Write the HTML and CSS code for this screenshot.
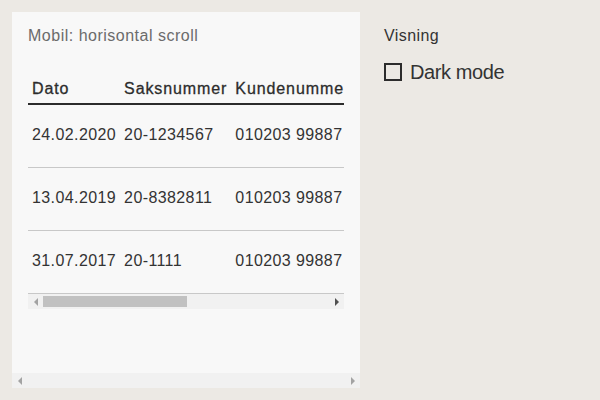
FILE: index.html
```html
<!DOCTYPE html>
<html lang="no">
<head>
<meta charset="utf-8">
<title>Tabell</title>
<link rel="stylesheet" href="styles.css">
</head>
<body>
<main class="layout">
  <section class="panel">
    <div class="panel-body">
      <h2 class="panel-title">Mobil: horisontal scroll</h2>
      <div class="table-scroll">
        <div class="table-clip">
          <table class="data-table">
            <thead>
              <tr>
                <th>Dato</th>
                <th>Saksnummer</th>
                <th>Kundenummer</th>
                <th>Kundenavn</th>
                <th>Status</th>
              </tr>
            </thead>
            <tbody>
              <tr>
                <td>24.02.2020</td>
                <td>20-1234567</td>
                <td>010203 99887</td>
                <td>Ola Nordmann</td>
                <td>Åpen</td>
              </tr>
              <tr>
                <td>13.04.2019</td>
                <td>20-8382811</td>
                <td>010203 99887</td>
                <td>Kari Nordmann</td>
                <td>Lukket</td>
              </tr>
              <tr>
                <td>31.07.2017</td>
                <td>20-1111</td>
                <td>010203 99887</td>
                <td>Per Hansen</td>
                <td>Lukket</td>
              </tr>
            </tbody>
          </table>
        </div>
        <div class="scrollbar" aria-hidden="true">
          <span class="sb-btn"><span class="arrow arrow-left arrow-dim"></span></span>
          <span class="sb-track"><span class="sb-thumb"></span></span>
          <span class="sb-btn"><span class="arrow arrow-right"></span></span>
        </div>
      </div>
    </div>
    <div class="scrollbar" aria-hidden="true">
      <span class="sb-btn"><span class="arrow arrow-left arrow-dim"></span></span>
      <span class="sb-track"></span>
      <span class="sb-btn"><span class="arrow arrow-right arrow-dim"></span></span>
    </div>
  </section>
  <aside class="settings">
    <h3 class="settings-title">Visning</h3>
    <label class="check">
      <input type="checkbox" class="check-input">
      <span class="check-box"></span>
      <span class="check-label">Dark mode</span>
    </label>
  </aside>
</main>
</body>
</html>
```

FILE: styles.css
```css
* { box-sizing: border-box; }

html, body {
  margin: 0;
  height: 100%;
}

body {
  background: #ece9e4;
  font-family: "Liberation Sans", Arial, sans-serif;
  color: #2c2c2c;
}

.layout {
  display: grid;
  grid-template-columns: 348px 1fr;
  gap: 24px;
  padding: 12px;
  height: 400px;
}

.panel {
  background: #f8f8f8;
  display: flex;
  flex-direction: column;
  min-width: 0;
  overflow: hidden;
}

.panel-body {
  flex: 1;
  padding: 12px 16px;
  min-height: 0;
}

.panel-title {
  margin: 0 0 21px;
  font-size: 16px;
  line-height: 24px;
  font-weight: 400;
  letter-spacing: 0.5px;
  color: #6b6b6b;
}

.table-clip {
  overflow: hidden;
}

.data-table {
  border-collapse: collapse;
  font-size: 16px;
  line-height: 24px;
  white-space: nowrap;
  letter-spacing: 0.4px;
}

.data-table th {
  text-align: left;
  font-weight: 400;
  letter-spacing: 0.9px;
  -webkit-text-stroke: 0.3px #2c2c2c;
  padding: 8px 4px 2px;
  border-bottom: 2px solid #2c2c2c;
}

.data-table td {
  padding: 18px 4px 20px;
  border-bottom: 1px solid #c8c8c8;
  color: #333;
}

.data-table th:last-child,
.data-table td:last-child {
  padding-right: 60px;
}

/* drawn scrollbars */
.scrollbar {
  display: flex;
  height: 15px;
  background: #f1f1f1;
  flex-shrink: 0;
}

.sb-btn {
  width: 15px;
  display: flex;
  align-items: center;
  justify-content: center;
}

.sb-track {
  flex: 1;
  display: flex;
  align-items: center;
}

.sb-thumb {
  width: 144px;
  height: 11px;
  background: #c1c1c1;
}

.arrow {
  width: 0;
  height: 0;
  border-top: 4px solid transparent;
  border-bottom: 4px solid transparent;
}

.arrow-left {
  border-right: 4px solid #505050;
}

.arrow-right {
  border-left: 4px solid #505050;
}

.arrow-left.arrow-dim {
  border-right-color: #a3a3a3;
}

.arrow-right.arrow-dim {
  border-left-color: #a3a3a3;
}

.settings {
  padding-top: 12px;
}

.settings-title {
  margin: 0 0 10px;
  font-size: 16px;
  line-height: 24px;
  font-weight: 400;
  letter-spacing: 0.4px;
  color: #333;
}

.check {
  display: flex;
  align-items: center;
  gap: 8px;
  height: 28px;
  cursor: pointer;
}

.check-input {
  position: absolute;
  opacity: 0;
  width: 0;
  height: 0;
}

.check-box {
  width: 18px;
  height: 18px;
  border: 2px solid #2c2c2c;
  background: transparent;
}

.check-label {
  font-size: 20px;
  line-height: 28px;
  letter-spacing: -0.4px;
  color: #333;
}
```
